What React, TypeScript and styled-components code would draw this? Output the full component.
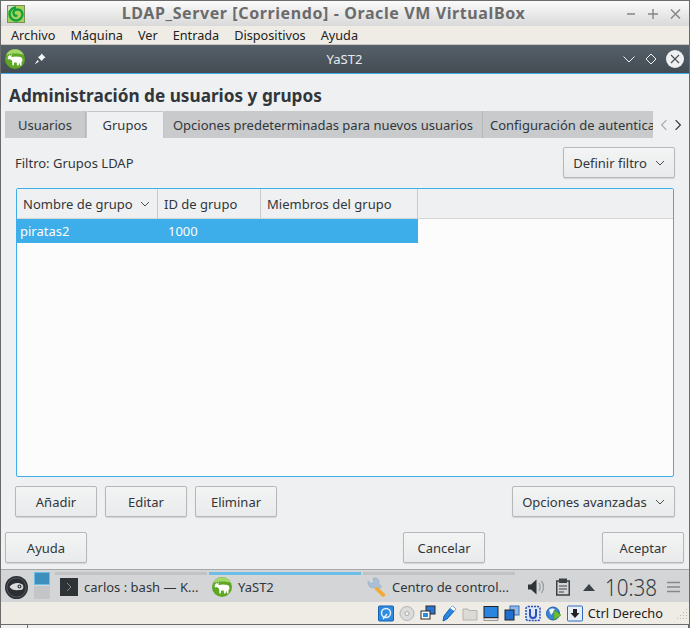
import React from "react";
import styled, { createGlobalStyle } from "styled-components";

const GlobalStyle = createGlobalStyle`
  html, body {
    margin: 0;
    padding: 0;
    background: #5a5a5a;
  }
  body {
    font-family: "Noto Sans", "Open Sans", sans-serif;
    font-size: 13px;
    color: #31363b;
  }
`;

const Win = styled.div`
  width: 690px;
  height: 628px;
  box-sizing: border-box;
  display: flex;
  flex-direction: column;
  overflow: hidden;
  border-left: 1px solid #6b6b6b;
  border-right: 1px solid #6b6b6b;
  border-top: 1px solid #6b6b6b;
  background: #efece6;
`;

const HostTitle = styled.div`
  height: 25px;
  flex: none;
  display: flex;
  align-items: center;
  padding: 0 6px;
  background: linear-gradient(#fbfbfb, #d9d9d9);
`;

const HostTitleText = styled.div`
  flex: 1;
  text-align: center;
  font-weight: 700;
  font-size: 16px;
  line-height: 22px;
  letter-spacing: 0.6px;
  color: #6b6b6b;
  padding-right: 5px;
  margin-top: -2px;
`;

const HostControls = styled.svg`
  margin-right: 2px;
  flex: none;
`;

const MenuBar = styled.div`
  height: 18px;
  flex: none;
  display: flex;
  align-items: center;
  gap: 15px;
  padding: 0 10px;
  font-size: 12.7px;
  color: #222;
  background: #efece6;
  border-bottom: 1px solid #c9c6bf;
`;

const GuestTitle = styled.div`
  height: 28px;
  flex: none;
  display: flex;
  align-items: center;
  padding: 0 5px;
  background: linear-gradient(#566069, #434c53);
  border-bottom: 1px solid #3daee9;
  color: #e8eaec;
`;

const GuestTitleText = styled.div`
  flex: 1;
  text-align: center;
  font-size: 13px;
`;

const GuestLeft = styled.div`
  display: flex;
  align-items: center;
  gap: 9px;
  width: 100px;
  margin-left: -1px;
`;

const GuestRight = styled.div`
  display: flex;
  align-items: center;
  justify-content: flex-end;
  gap: 8px;
  width: 100px;
`;

const Dialog = styled.div`
  height: 496px;
  flex: none;
  display: flex;
  flex-direction: column;
  background: #eff0f1;
  padding: 0 5px;
  box-sizing: border-box;
  border-bottom: 1px solid #a5a7a9;
`;

const Heading = styled.h1`
  margin: 11px 0 0 3px;
  height: 26px;
  font-size: 17.2px;
  line-height: 22px;
  font-weight: 700;
  color: #31363b;
`;

const TabRow = styled.div`
  display: flex;
  height: 27px;
  align-items: stretch;
  flex: none;
  margin-left: -1px;
`;

const Tab = styled.div<{ $active?: boolean; $w: number; $last?: boolean }>`
  width: ${(p) => p.$w}px;
  flex: none;
  box-sizing: border-box;
  display: flex;
  align-items: center;
  justify-content: ${(p) => (p.$last ? "flex-start" : "center")};
  padding-left: ${(p) => (p.$last ? 7 : 0)}px;
  overflow: hidden;
  white-space: nowrap;
  font-size: 13px;
  background: ${(p) => (p.$active ? "#eff0f1" : "#c8cacc")};
  border-right: ${(p) => (p.$active || p.$last ? "none" : "1px solid #b4b6b8")};
  ${(p) => p.$active && "border: 1px solid #c4c6c8; border-bottom: none; border-radius: 2px 2px 0 0;"}
`;

const TabArrows = styled.div`
  display: flex;
  align-items: center;
  justify-content: space-between;
  width: 26px;
  margin-left: 5px;
`;

const TabBody = styled.div`
  flex: none;
  display: flex;
  flex-direction: column;
  padding: 9px 0 0 9px;
  margin-right: 9px;
`;

const FilterRow = styled.div`
  display: flex;
  align-items: center;
  justify-content: space-between;
  height: 31px;
  flex: none;
`;

const Button = styled.div<{ $w: number }>`
  width: ${(p) => p.$w}px;
  height: 31px;
  flex: none;
  box-sizing: border-box;
  display: flex;
  align-items: center;
  justify-content: center;
  gap: 8px;
  font-size: 13px;
  border: 1px solid #b5b7b9;
  border-radius: 2px;
  background: linear-gradient(#f3f4f4, #e9eaeb);
  box-shadow: 0 1px 1px rgba(0, 0, 0, 0.12);
`;

const Table = styled.div`
  margin: 10px 1px 0;
  height: 289px;
  flex: none;
  box-sizing: border-box;
  border: 1px solid #3daee9;
  border-radius: 2px;
  background: #fcfcfc;
  display: flex;
  flex-direction: column;
`;

const HeaderRow = styled.div`
  display: flex;
  height: 30px;
  flex: none;
  background: #eff0f1;
  border-bottom: 1px solid #d3d5d6;
  box-sizing: border-box;
`;

const HeaderCell = styled.div<{ $w: number }>`
  width: ${(p) => p.$w}px;
  flex: none;
  box-sizing: border-box;
  display: flex;
  align-items: center;
  justify-content: space-between;
  padding: 0 7px 0 6px;
  font-size: 13px;
  border-right: 1px solid #c8cacc;
`;

const SelectedRow = styled.div`
  display: flex;
  align-items: center;
  width: 401px;
  height: 24px;
  flex: none;
  background: #3daee9;
  color: #fcfcfc;
  font-size: 13px;
`;

const RowCell = styled.div<{ $w: number; $pl: number }>`
  width: ${(p) => p.$w}px;
  padding-left: ${(p) => p.$pl}px;
  box-sizing: border-box;
`;

const ActionRow = styled.div`
  display: flex;
  gap: 8px;
  margin-top: 9px;
  flex: none;
`;

const Spring = styled.div`
  flex: 1;
`;

const FooterRow = styled.div`
  display: flex;
  align-items: center;
  margin: 15px 0 0 -1px;
  flex: none;
`;

const CancelSlot = styled.div`
  margin-right: 117px;
`;

const Taskbar = styled.div`
  height: 32px;
  flex: none;
  box-sizing: border-box;
  display: flex;
  align-items: stretch;
  background: #d3d5d7;
  padding-left: 4px;
`;

const LogoSlot = styled.div`
  display: flex;
  align-self: center;
  margin-top: 2px;
`;

const Pager = styled.div`
  display: flex;
  flex-direction: column;
  gap: 1px;
  width: 16px;
  margin: 2px 5px 0 6px;
`;

const PagerCell = styled.div<{ $on?: boolean }>`
  height: 13px;
  box-sizing: border-box;
  background: ${(p) => (p.$on ? "#3e8fbd" : "#c3c5c7")};
  border: ${(p) => (p.$on ? "1px solid #6dbfe8" : "none")};
`;

const TaskItem = styled.div<{ $bar: string; $pl: number }>`
  width: 152px;
  margin: 2px 2px 0 0;
  flex: none;
  box-sizing: border-box;
  display: flex;
  align-items: center;
  gap: 6px;
  padding: 0 0 3px ${(p) => p.$pl}px;
  font-size: 13px;
  white-space: nowrap;
  border-top: 3px solid ${(p) => p.$bar};
`;

const Tray = styled.div`
  flex: 1;
  display: flex;
  align-items: center;
  justify-content: flex-end;
  gap: 10px;
  padding: 2px 9px 0 0;
`;

const Clock = styled.div`
  width: 52px;
  display: flex;
  justify-content: center;
  font-size: 24px;
  line-height: 26px;
  font-weight: 300;
  color: #363b40;
  transform: scaleX(0.86);
`;

const StatusBar = styled.div`
  height: 22px;
  flex: none;
  display: flex;
  align-items: center;
  justify-content: flex-end;
  gap: 5px;
  padding-right: 1px;
  background: #efece6;
  border-bottom: 1px solid #6b6b6b;
  font-size: 12.8px;
  color: #222;
`;

const StatusLabel = styled.span`
  margin-right: 8px;
`;

const BottomStrip = styled.div`
  flex: 1;
  display: flex;
  justify-content: space-between;
  background: #f1f1f1;
`;

const StripNotch = styled.div<{ $w: number }>`
  width: ${(p) => p.$w}px;
  border-right: 1px solid #6b6b6b;
`;

const Chevron = ({ color = "#4d4d4d", dir = "down", size = 10 }: { color?: string; dir?: string; size?: number }) => {
  const d = dir === "down" ? "M1 3l4 4 4-4" : dir === "left" ? "M7 1L3 5l4 4" : "M3 1l4 4-4 4";
  return (
    <svg width={size} height={size} viewBox="0 0 10 10" fill="none">
      <path d={d} stroke={color} strokeWidth="1" />
    </svg>
  );
};

const VBoxIcon = () => (
  <svg width="18" height="18" viewBox="0 0 18 18">
    <rect x="0.500" y="0.500" width="17" height="17" fill="#a6d25c" stroke="#7b8f5a" />
    <rect x="1" y="1" width="6" height="4" fill="#d8dccb" />
    <path d="M9 2.500a6.500 6.500 0 1 0 6.500 7c0-3-2-5-5-5s-4.500 2-4 4 2.500 3 3.500 1.500" fill="none" stroke="#14a03c" strokeWidth="2.400" />
  </svg>
);

const YastIcon = ({ size = 20 }: { size?: number }) => (
  <svg width={size} height={size} viewBox="0 0 20 20">
    <circle cx="10" cy="10" r="10" fill="#5ea722" />
    <path d="M1 6a10 10 0 0 1 18 0c-4-2-14-2-18 0z" fill="#a3d76a" />
    <path d="M2 6.500l2.500 1L3.500 5l2 2 1-2.500V8c3-.8 6-.8 9 0 1.300.5 2 1.500 2 3.500l-.7 2-.3-2.500v5.500H15l-.5-3-1 3H12l-.3-3H9.200l-.4 3H7.500L7 11.500 4.500 10 3 10.500 2.500 9l1-1z" fill="#fff" />
  </svg>
);

const PinIcon = () => (
  <svg width="12" height="12" viewBox="0 0 12 12">
    <path d="M7.500 0.500l4 4-1.500.7-2.300 2.800-3.700-3.700L6.800 2zM3.500 7L0.500 11.500 5 8.500z" fill="#f4f5f6" />
  </svg>
);

const CloseIcon = () => (
  <svg width="18" height="18" viewBox="0 0 18 18">
    <circle cx="9" cy="9" r="9" fill="#eef0f1" />
    <path d="M5 5l8 8M13 5l-8 8" stroke="#4a535a" strokeWidth="1.200" />
  </svg>
);

const GeekoLogo = () => (
  <svg width="23" height="23" viewBox="0 0 23 23">
    <circle cx="11.500" cy="11.500" r="11.500" fill="#2b2f33" />
    <circle cx="11.500" cy="11.500" r="9.600" fill="none" stroke="#5e6367" strokeWidth="0.800" />
    <path d="M4.500 11c2.500-4 9-5.500 13-2.500 1.500 2 1 5.500-2 5.500-3.500 0-6.500 1.500-11-3z" fill="#d9dbdc" />
    <circle cx="14.500" cy="10.500" r="2" fill="#2b2f33" />
    <circle cx="14.500" cy="10.500" r="0.900" fill="#d9dbdc" />
  </svg>
);

const TerminalIcon = () => (
  <svg width="18" height="18" viewBox="0 0 18 18">
    <rect width="18" height="18" fill="#2e3336" />
    <path d="M7 5l4 4-4 4" fill="none" stroke="#7f8c8d" strokeWidth="1" />
  </svg>
);

const WrenchIcon = () => (
  <svg width="19" height="20" viewBox="0 0 19 20">
    <path d="M1 4l3 2.500L7 5.500 6 1.500c3-1.500 6 .5 6 3.500 0 .8 0 1.200-.3 1.800l3 3-4 4-3-3C4 11.800 .2 8.800 1 4z" fill="#a9c0d8" stroke="#8ea6bf" strokeWidth="0.500" />
    <path d="M10 9.500l8 7.500c1 2-1.500 3.500-3 2.500l-7.500-7.500z" fill="#f4a937" />
  </svg>
);

const SpeakerIcon = () => (
  <svg width="18" height="18" viewBox="0 0 18 18">
    <path d="M0 6.500h3L8.500 1.500v15L3 11.500H0z" fill="#2f3438" />
    <path d="M11 5c1.500 2.500 1.500 5.500 0 8M13.500 3c2.700 3.500 2.700 8.500 0 12" fill="none" stroke="#9a9ea2" strokeWidth="1.300" />
  </svg>
);

const ClipboardIcon = () => (
  <svg width="17" height="18" viewBox="0 0 17 18">
    <rect x="0.750" y="3" width="12.500" height="14" fill="none" stroke="#3c4146" strokeWidth="1.500" />
    <rect x="3" y="0.500" width="8" height="4.500" fill="#3c4146" />
    <path d="M3 8h8M3 11h8M3 14h5" stroke="#3c4146" />
  </svg>
);

const TriangleUp = () => (
  <svg width="12" height="8" viewBox="0 0 12 8">
    <path d="M0 8l6-7 6 7z" fill="#3c4146" />
  </svg>
);

const MenuIcon = () => (
  <svg width="13" height="12" viewBox="0 0 13 12">
    <path d="M0 1.500h13M0 6h13M0 10.500h13" stroke="#85898d" strokeWidth="1.500" />
  </svg>
);

const BlueSquare = ({ children }: { children?: React.ReactNode }) => (
  <svg width="16" height="17" viewBox="0 0 16 17">{children}</svg>
);

const GripDots = () => (
  <svg width="12" height="13" viewBox="0 0 12 13" fill="#bcbab4">
    <rect x="10" y="2" width="1" height="1" />
    <rect x="7" y="5" width="1" height="1" />
    <rect x="10" y="5" width="1" height="1" />
    <rect x="4" y="8" width="1" height="1" />
    <rect x="7" y="8" width="1" height="1" />
    <rect x="10" y="8" width="1" height="1" />
    <rect x="1" y="11" width="1" height="1" />
    <rect x="4" y="11" width="1" height="1" />
    <rect x="7" y="11" width="1" height="1" />
    <rect x="10" y="11" width="1" height="1" />
  </svg>
);

const StatusIcons = () => (
  <>
    <BlueSquare>
      <rect x="0.500" y="1" width="15" height="15" rx="1" fill="#2f8be0" stroke="#1a60b0" />
      <circle cx="8" cy="8" r="4.500" fill="none" stroke="#e8f4ff" strokeWidth="1.400" />
      <path d="M5 14l4-5" stroke="#e8f4ff" strokeWidth="1.400" />
    </BlueSquare>
    <BlueSquare>
      <circle cx="8" cy="8.500" r="7" fill="#dcdcdc" stroke="#b5b5b5" />
      <circle cx="8" cy="8.500" r="2" fill="#f5f5f5" stroke="#aaa" />
    </BlueSquare>
    <BlueSquare>
      <rect x="6" y="1" width="9" height="8" fill="#2a75d0" stroke="#2b2b2b" />
      <rect x="1" y="6" width="9" height="8" fill="#fff" stroke="#2b2b2b" />
      <rect x="3" y="8" width="5" height="4" fill="#2a8be0" />
    </BlueSquare>
    <BlueSquare>
      <path d="M11 1l4 3-9 10-4 2 1-5z" fill="#2a85e0" stroke="#145fb0" />
      <path d="M11 1l4 3-2 2-4-3z" fill="#fff" />
    </BlueSquare>
    <BlueSquare>
      <path d="M1 4h5l1 1.500h8V15H1z" fill="#dcdad5" stroke="#b5b3ae" />
    </BlueSquare>
    <BlueSquare>
      <rect x="1" y="1.500" width="14" height="11" fill="#2a85e0" stroke="#222" />
      <rect x="1" y="13" width="14" height="2.500" fill="#e8e8e8" stroke="#444" strokeWidth="0.500" />
    </BlueSquare>
    <BlueSquare>
      <rect x="6" y="1" width="9" height="9" fill="#8fb8e8" stroke="#3a70b5" />
      <rect x="1" y="5" width="9" height="10" fill="#1f6fd0" stroke="#222" />
    </BlueSquare>
    <BlueSquare>
      <rect x="1" y="1.500" width="14" height="14" rx="2" fill="#dbe6f8" stroke="#2a50b5" strokeWidth="1.500" strokeDasharray="2 1" />
      <path d="M5 4v6c0 4 6 4 6 0V4" fill="none" stroke="#2a50b5" strokeWidth="2" />
    </BlueSquare>
    <BlueSquare>
      <circle cx="7" cy="8.500" r="6.500" fill="#3a86d8" stroke="#1d5ea8" />
      <path d="M3 5c2-2 5-2 6 0L5 10z" fill="#eef5fc" />
      <path d="M8 5l7 5-7 5z" fill="#6cc02e" stroke="#3e8a12" strokeWidth="0.500" />
    </BlueSquare>
    <BlueSquare>
      <rect x="0.500" y="1" width="15" height="15" rx="1" fill="#e8eef6" stroke="#2d6cc0" />
      <path d="M6 4h4v4h2.500L8 13 3.500 8H6z" fill="#222" />
    </BlueSquare>
  </>
);

export default function App() {
  return (
    <>
      <GlobalStyle />
      <Win>
        <HostTitle>
          <VBoxIcon />
          <HostTitleText>LDAP_Server [Corriendo] - Oracle VM VirtualBox</HostTitleText>
          <HostControls width="54" height="12" viewBox="0 0 54 12" fill="none" stroke="#858585" strokeWidth="1.400">
            <path d="M0 6h8M26 1v10M21 6h10M44 1.500l9 9M53 1.500l-9 9" />
          </HostControls>
        </HostTitle>
        <MenuBar>
          <span>Archivo</span>
          <span>Máquina</span>
          <span>Ver</span>
          <span>Entrada</span>
          <span>Dispositivos</span>
          <span>Ayuda</span>
        </MenuBar>
        <GuestTitle>
          <GuestLeft>
            <YastIcon />
            <PinIcon />
          </GuestLeft>
          <GuestTitleText>YaST2</GuestTitleText>
          <GuestRight>
            <svg width="14" height="14" viewBox="0 0 14 14" fill="none">
              <path d="M1.500 4.500L7 10l5.500-5.500" stroke="#eef0f1" />
            </svg>
            <svg width="14" height="14" viewBox="0 0 14 14" fill="none">
              <path d="M7 2l5 5-5 5-5-5z" stroke="#eef0f1" />
            </svg>
            <CloseIcon />
          </GuestRight>
        </GuestTitle>
        <Dialog>
          <Heading>Administración de usuarios y grupos</Heading>
          <TabRow>
            <Tab $w={81}>Usuarios</Tab>
            <Tab $w={78} $active>Grupos</Tab>
            <Tab $w={319}>Opciones predeterminadas para nuevos usuarios</Tab>
            <Tab $w={170} $last>Configuración de autenticación</Tab>
            <TabArrows>
              <Chevron dir="left" color="#a8aaac" size={12} />
              <Chevron dir="right" color="#31363b" size={12} />
            </TabArrows>
          </TabRow>
          <TabBody>
            <FilterRow>
              <span>Filtro: Grupos LDAP</span>
              <Button $w={112}>
                Definir filtro
                <Chevron />
              </Button>
            </FilterRow>
            <Table>
              <HeaderRow>
                <HeaderCell $w={141}>
                  Nombre de grupo
                  <Chevron />
                </HeaderCell>
                <HeaderCell $w={103}>ID de grupo</HeaderCell>
                <HeaderCell $w={157}>Miembros del grupo</HeaderCell>
              </HeaderRow>
              <SelectedRow>
                <RowCell $w={147} $pl={3}>piratas2</RowCell>
                <RowCell $w={100} $pl={4}>1000</RowCell>
              </SelectedRow>
            </Table>
            <ActionRow>
              <Button $w={82}>Añadir</Button>
              <Button $w={82}>Editar</Button>
              <Button $w={82}>Eliminar</Button>
              <Spring />
              <Button $w={163}>
                Opciones avanzadas
                <Chevron />
              </Button>
            </ActionRow>
          </TabBody>
          <FooterRow>
            <Button $w={82}>Ayuda</Button>
            <Spring />
            <CancelSlot>
              <Button $w={82}>Cancelar</Button>
            </CancelSlot>
            <Button $w={82}>Aceptar</Button>
          </FooterRow>
        </Dialog>
        <Taskbar>
          <LogoSlot>
            <GeekoLogo />
          </LogoSlot>
          <Pager>
            <PagerCell $on />
            <PagerCell />
          </Pager>
          <TaskItem $bar="#c0c2c4" $pl={5}>
            <TerminalIcon />
            carlos : bash — K...
          </TaskItem>
          <TaskItem $bar="#6cbde8" $pl={3}>
            <YastIcon />
            YaST2
          </TaskItem>
          <TaskItem $bar="#c0c2c4" $pl={4}>
            <WrenchIcon />
            Centro de control...
          </TaskItem>
          <Tray>
            <SpeakerIcon />
            <ClipboardIcon />
            <TriangleUp />
            <Clock>10:38</Clock>
            <MenuIcon />
          </Tray>
        </Taskbar>
        <StatusBar>
          <StatusIcons />
          <StatusLabel>Ctrl Derecho</StatusLabel>
          <GripDots />
        </StatusBar>
        <BottomStrip>
          <StripNotch $w={26} />
          <StripNotch $w={25} />
        </BottomStrip>
      </Win>
    </>
  );
}
